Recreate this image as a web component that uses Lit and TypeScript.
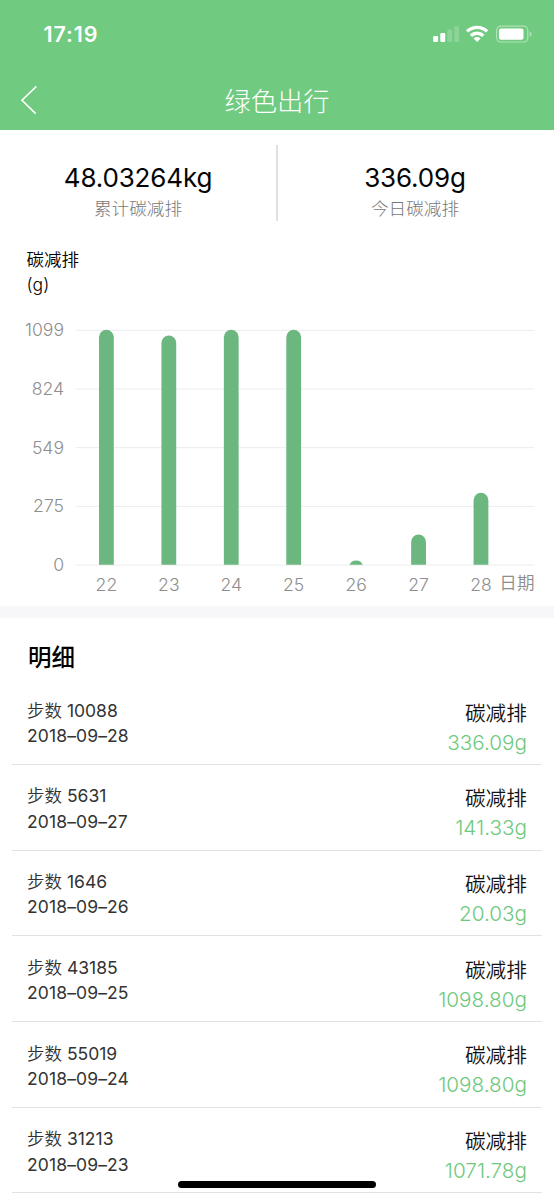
import { LitElement, html, svg, css } from "lit";
import { customElement, property } from "lit/decorators.js";

interface Entry {
  steps: string;
  date: string;
  saved: string;
}

const ENTRIES: Entry[] = [
  { steps: "10088", date: "2018–09–28", saved: "336.09g" },
  { steps: "5631", date: "2018–09–27", saved: "141.33g" },
  { steps: "1646", date: "2018–09–26", saved: "20.03g" },
  { steps: "43185", date: "2018–09–25", saved: "1098.80g" },
  { steps: "55019", date: "2018–09–24", saved: "1098.80g" },
  { steps: "31213", date: "2018–09–23", saved: "1071.78g" },
];

const BARS = [
  { day: "22", value: 1098.8 },
  { day: "23", value: 1071.78 },
  { day: "24", value: 1098.8 },
  { day: "25", value: 1098.8 },
  { day: "26", value: 20.03 },
  { day: "27", value: 141.33 },
  { day: "28", value: 336.09 },
];

@customElement("status-bar")
class StatusBar extends LitElement {
  static styles = css`
    :host {
      display: flex;
      justify-content: space-between;
      align-items: center;
      height: 68px;
      padding: 0 22px 0 43.5px;
      box-sizing: border-box;
    }
    .time {
      font-size: 21.5px;
      font-weight: 600;
      line-height: 26px;
      letter-spacing: 0.9px;
    }
    .icons {
      display: block;
    }
  `;
  render() {
    return html`
      <span class="time">17:19</span>
      <svg class="icons" width="100" height="20" viewBox="432 24 100 20" fill="#fff">
        <rect x="433.2" y="36" width="4.9" height="6" rx="1.3" />
        <rect x="440.3" y="33" width="4.9" height="9" rx="1.3" />
        <rect x="447.4" y="29.5" width="4.7" height="12.5" rx="1.3" opacity=".2" />
        <rect x="454.3" y="26.2" width="4.7" height="15.8" rx="1.3" opacity=".2" />
        <g fill="none" stroke="#fff" stroke-width="3.4">
          <path d="M467.1 31.4a14.4 14.4 0 0 1 20 0" />
          <path d="M470.9 35.8a9 9 0 0 1 12.4 0" />
        </g>
        <path d="M473.6 38.4a5 5 0 0 1 7 0L477.1 42z" />
        <rect x="496.6" y="26.2" width="31.2" height="15.8" rx="4.2" fill="none" stroke="#fff" stroke-width="1.2" opacity=".45" />
        <rect x="499" y="28.5" width="24.5" height="11.2" rx="2" />
        <path d="M529.7 31.5q2 .8 2 2.6t-2 2.6z" opacity=".45" />
      </svg>
    `;
  }
}

@customElement("nav-bar")
class NavBar extends LitElement {
  static styles = css`
    :host {
      display: grid;
      grid-template-columns: 60px 1fr 60px;
      align-items: center;
      height: 62px;
    }
    .back {
      display: block;
      margin-left: 20px;
    }
    .title {
      text-align: center;
      font-size: 26.3px;
      font-weight: 300;
      line-height: 36px;
      padding-top: 5px;
    }
  `;
  render() {
    return html`
      <svg class="back" width="20" height="32" viewBox="0 0 20 32" fill="none" stroke="#fff" stroke-width="1.6">
        <path d="M16.4 3.3 2 17.2 15.7 30.6" />
      </svg>
      <span class="title">绿色出行</span>
    `;
  }
}

@customElement("summary-stat")
class SummaryStat extends LitElement {
  @property() value = "";
  @property() label = "";
  static styles = css`
    :host {
      display: flex;
      flex-direction: column;
      align-items: center;
      padding-top: 17px;
    }
    .value {
      font-size: 26px;
      line-height: 32px;
      letter-spacing: -0.15px;
      color: #050505;
    }
    .label {
      font-size: 17.6px;
      font-weight: 300;
      line-height: 24px;
      margin-top: 3px;
      color: #777;
    }
  `;
  render() {
    return html`<span class="value">${this.value}</span><span class="label">${this.label}</span>`;
  }
}

@customElement("bar-chart")
class BarChart extends LitElement {
  static styles = css`
    :host {
      display: block;
      height: 300px;
    }
    .chart {
      display: block;
    }
    .tick {
      font-size: 17.6px;
      font-weight: 350;
      fill: #8e8e8e;
    }
    .grid {
      stroke: #ececee;
      stroke-width: 1;
    }
    .bar {
      fill: #6cb77f;
    }
  `;
  private bar(value: number, i: number) {
    const x = 99 + i * 62.43;
    const h = (value / 1099) * 235;
    const top = 564.7 - h;
    const r = 7.4;
    // Bars shorter than the cap radius are drawn as a circular segment.
    if (h < r) {
      const half = Math.sqrt(r * r - (r - h) * (r - h));
      return svg`<path class="bar" d="M${x + r - half} 564.7A${r} ${r} 0 0 1 ${x + r + half} 564.7z"/>`;
    }
    return svg`<path class="bar" d="M${x} 564.7V${top + r}a${r} ${r} 0 0 1 ${2 * r} 0V564.7z"/>`;
  }
  render() {
    const ticks = ["1099", "824", "549", "275", "0"];
    return html`
      <svg class="chart" width="554" height="300" viewBox="0 305 554 300">
        ${ticks.map((t, i) => {
          const y = 330.3 + i * 58.7;
          return svg`<line class="grid" x1="76" x2="534.5" y1=${y} y2=${y}/>
            <text class="tick" x="64" y=${y + 6} text-anchor="end">${t}</text>`;
        })}
        ${BARS.map((b, i) => this.bar(b.value, i))}
        ${BARS.map((b, i) => svg`<text class="tick" x=${106.4 + i * 62.43} y="590.6" text-anchor="middle">${b.day}</text>`)}
        <text class="tick" x="499.3" y="589.4">日期</text>
      </svg>
    `;
  }
}

@customElement("detail-row")
class DetailRow extends LitElement {
  @property({ attribute: false }) entry!: Entry;
  static styles = css`
    :host {
      display: flex;
      justify-content: space-between;
      height: 85.7px;
      box-sizing: border-box;
      margin: 0 12px;
      padding: 18.6px 15px 0;
      border-bottom: 1.5px solid #e2e2e4;
    }
    .left,
    .right {
      display: flex;
      flex-direction: column;
    }
    .left {
      font-size: 17.5px;
      line-height: 25.3px;
      color: #333;
    }
    .steps {
      font-weight: 350;
    }
    .number {
      font-weight: 400;
    }
    .date {
      letter-spacing: 0.12px;
    }
    .right {
      align-items: flex-end;
      line-height: 29px;
      padding-top: 0.8px;
    }
    .name {
      font-size: 20.7px;
      font-weight: 350;
      color: #111;
    }
    .saved {
      font-size: 20.7px;
      font-weight: 300;
      color: #6fc97e;
    }
  `;
  render() {
    const e = this.entry;
    return html`
      <div class="left">
        <span class="steps">步数 <span class="number">${e.steps}</span></span>
        <span class="date">${e.date}</span>
      </div>
      <div class="right"><span class="name">碳减排</span><span class="saved">${e.saved}</span></div>
    `;
  }
}

@customElement("app-root")
class AppRoot extends LitElement {
  static styles = css`
    :host {
      display: block;
      position: relative;
      width: 554px;
      height: 1200px;
      overflow: hidden;
      background: #fff;
      font-family: Inter, "Noto Sans CJK SC", sans-serif;
    }
    .header {
      height: 130px;
      background: #70ca7f;
      color: #fff;
    }
    .summary {
      display: grid;
      grid-template-columns: 278px 1fr;
      margin-top: 15px;
      height: 76px;
    }
    .total {
      border-right: 2px solid #e0e0e0;
    }
    .today {
      padding-right: 2px;
    }
    .unit {
      margin-top: 26px;
      height: 58px;
      padding-left: 26.5px;
      font-size: 17.5px;
      font-weight: 350;
      line-height: 25px;
      color: #000;
    }
    .gap {
      height: 12.5px;
      margin-top: 0.5px;
      background: #f7f7fa;
    }
    .heading {
      margin: 0;
      height: 61.2px;
      padding: 20px 0 0 28px;
      box-sizing: border-box;
      font-size: 23.5px;
      font-weight: 500;
      line-height: 40px;
      color: #000;
    }
    .home {
      position: absolute;
      left: 178px;
      top: 1180.5px;
      width: 198px;
      height: 7.5px;
      border-radius: 4px;
      background: #000;
    }
  `;
  render() {
    return html`
      <div class="header">
        <status-bar></status-bar>
        <nav-bar></nav-bar>
      </div>
      <div class="summary">
        <summary-stat class="total" value="48.03264kg" label="累计碳减排"></summary-stat>
        <summary-stat class="today" value="336.09g" label="今日碳减排"></summary-stat>
      </div>
      <div class="unit">碳减排<br />(g)</div>
      <bar-chart></bar-chart>
      <div class="gap"></div>
      <h2 class="heading">明细</h2>
      ${ENTRIES.map((e) => html`<detail-row .entry=${e}></detail-row>`)}
      <div class="home"></div>
    `;
  }
}
